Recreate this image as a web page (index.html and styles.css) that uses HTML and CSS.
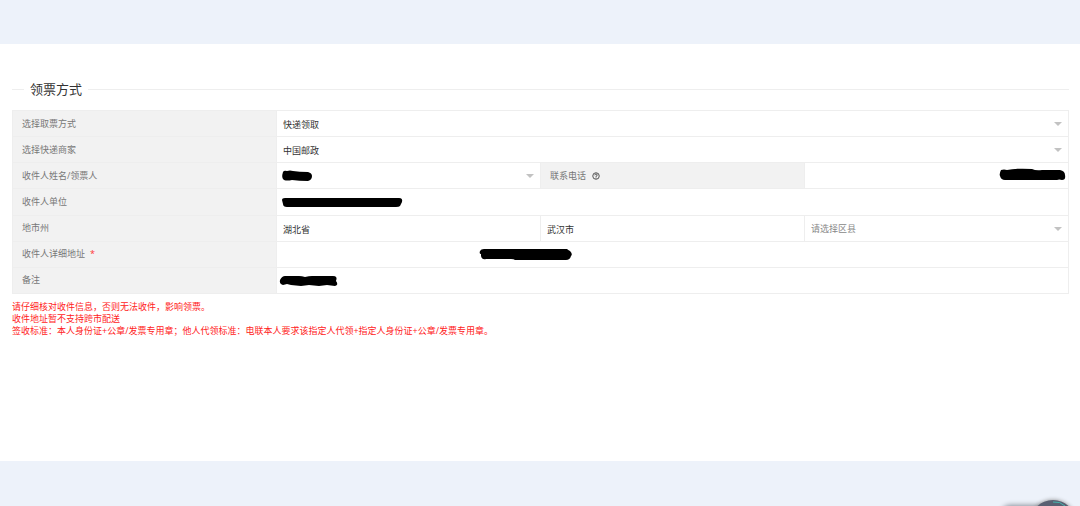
FILE: index.html
```html
<!DOCTYPE html>
<html lang="zh-CN">
<head>
<meta charset="utf-8">
<title>领票方式</title>
<link rel="stylesheet" href="styles.css">
</head>
<body>
<main class="panel">
  <form class="pickup">
    <h1 class="heading">领票方式</h1>
    <div class="form-grid">
      <label class="label" for="method">选择取票方式</label>
      <div class="field wide drop"><select class="control" id="method"><option>快递领取</option></select></div>

      <label class="label" for="courier">选择快递商家</label>
      <div class="field wide drop"><select class="control" id="courier"><option>中国邮政</option></select></div>

      <label class="label" for="name">收件人姓名/领票人</label>
      <div class="field drop">
        <select class="control" id="name"><option></option></select>
        <svg class="ink ink-name" width="32" height="14" viewBox="0 0 32 14" aria-hidden="true"><path d="M2 3Q3 1 6 2Q9 1 12 2Q18 3 27 3Q31 4 31 7Q31 11 27 12Q18 12 11 11Q6 12 3 11Q0 9 2 3Z"/></svg>
      </div>
      <div class="label">
        <label for="phone">联系电话</label>
        <svg class="help" width="8" height="8" viewBox="0 0 16 16" aria-hidden="true"><circle cx="8" cy="8" r="6.500"/><path d="M5.500 6.500Q5.500 4 8 4T10.500 6.300Q10.500 7.500 8 8.700V10M8 11V13"/></svg>
      </div>
      <div class="field">
        <input class="control" id="phone" type="tel">
        <svg class="ink ink-phone" width="67" height="14" viewBox="0 0 67 14" aria-hidden="true"><path d="M2 2Q5 1 8 2Q18 0 33 1Q37 3 43 2H61Q66 3 66 7Q67 12 63 12Q60 11 58 12H6Q2 12 1 8Q0 6 2 2Z"/></svg>
      </div>

      <label class="label" for="company">收件人单位</label>
      <div class="field wide">
        <input class="control" id="company" type="text">
        <svg class="ink ink-company" width="122" height="12" viewBox="0 0 122 12" aria-hidden="true"><path d="M1 3Q1 1 4 1H118Q122 1 121 5L119 9Q118 10 115 10H6Q2 10 2 7Z"/></svg>
      </div>

      <label class="label" for="province">地市州</label>
      <div class="field"><input class="control" id="province" type="text" value="湖北省"></div>
      <div class="field"><input class="control" type="text" value="武汉市" aria-label="市"></div>
      <div class="field drop"><select class="control muted" aria-label="区县"><option>请选择区县</option></select></div>

      <label class="label" for="address">收件人详细地址<span class="required">*</span></label>
      <div class="field wide">
        <input class="control" id="address" type="text">
        <svg class="ink ink-address" width="94" height="14" viewBox="0 0 94 14" aria-hidden="true"><path d="M1 3Q2 1 5 1H88Q89 2 91 3Q94 6 92 8Q91 12 87 12H36Q35 11 32 11H7Q3 12 2 8V6Q0 6 1 3Z"/></svg>
      </div>

      <label class="label" for="remark">备注</label>
      <div class="field wide">
        <input class="control" id="remark" type="text">
        <svg class="ink ink-remark" width="60" height="12" viewBox="0 0 60 12" aria-hidden="true"><path d="M1 5Q3 1 6 1H20Q23 1 26 2Q30 1 33 1H54Q59 1 57 6Q60 10 56 11L48 10L40 11L30 10L22 11L12 10L8 9L4 10Q0 9 1 5Z"/></svg>
      </div>
    </div>
    <div class="notes">
      <p>请仔细核对收件信息，否则无法收件，影响领票。</p>
      <p>收件地址暂不支持跨市配送</p>
      <p>签收标准：本人身份证+公章/发票专用章；他人代领标准：电联本人要求该指定人代领+指定人身份证+公章/发票专用章。</p>
    </div>
  </form>
</main>
<div class="assistant">
  <span class="assistant-bar"></span>
  <span class="assistant-face"></span>
  <svg class="assistant-shine" width="16" height="6" viewBox="0 0 16 6" aria-hidden="true"><path d="M1 2Q8 1 13 6"/></svg>
</div>
</body>
</html>
```
FILE: styles.css
```css
* {
  box-sizing: border-box;
}

body {
  margin: 0;
  min-height: 100vh;
  padding: 44px 0 45px;
  display: flex;
  flex-direction: column;
  background: #edf2fa;
  color: #333;
  font: 9px/12px "Open Sans", "Noto Sans CJK SC", sans-serif;
}

.panel {
  flex: 1;
  padding: 36px 11px 24px 12px;
  background: #fff;
}

.heading {
  display: flex;
  align-items: center;
  gap: 6px;
  margin: 0 0 12px;
  font-size: 13px;
  line-height: 18px;
  font-weight: 400;
}

.heading::before,
.heading::after {
  content: "";
  height: 1px;
  background: #eee;
}

.heading::before {
  width: 12px;
}

.heading::after {
  flex: 1;
}

.form-grid {
  display: grid;
  grid-template-columns: repeat(4, 1fr);
  grid-auto-rows: 1fr;
  min-height: 184px;
  border: solid #eee;
  border-width: 1px 0 0 1px;
}

.label,
.field {
  display: flex;
  align-items: center;
  border: solid #eee;
  border-width: 0 1px 1px 0;
}

.label {
  padding: 0 9px;
  background: #f2f2f2;
  color: #777;
}

.field {
  position: relative;
}

.wide {
  grid-column: span 3;
}

.control {
  width: 100%;
  height: 24px;
  margin: 0;
  padding: 2px 6px 0;
  border: 0;
  outline: 0;
  background: transparent;
  color: #333;
  font: inherit;
  appearance: none;
}

.control.muted {
  color: #888;
}

.drop::after {
  content: "";
  position: absolute;
  right: 6px;
  top: 11px;
  border: solid transparent;
  border-width: 4px 4px 0;
  border-top-color: #c2c2c2;
  pointer-events: none;
}

.required {
  margin-left: 5px;
  color: #f33;
}

.help {
  margin-left: 6px;
  fill: none;
  stroke: #555;
  stroke-width: 2;
}

.ink {
  position: absolute;
  fill: #000;
  pointer-events: none;
}

.ink-name {
  left: 4px;
  top: 6px;
}

.ink-phone {
  right: 2px;
  top: 5px;
}

.ink-company {
  left: 4px;
  top: 8px;
}

.ink-address {
  left: 202px;
  top: 6px;
}

.ink-remark {
  left: 2px;
  top: 7px;
}

.notes {
  margin-top: 7px;
  color: #f22;
}

.notes p {
  margin: 0;
}

.assistant {
  position: fixed;
  right: 0;
  bottom: 0;
  width: 90px;
  height: 16px;
  overflow: hidden;
}

.assistant-bar {
  position: absolute;
  left: 12px;
  top: 16px;
  width: 50px;
  height: 30px;
  border-radius: 8px;
  box-shadow: 0 0 5px 1px #8c929c;
}

.assistant-face {
  position: absolute;
  right: 4px;
  top: 10px;
  width: 46px;
  height: 46px;
  border-radius: 50%;
  background: #596072;
  box-shadow: 0 0 4px #888;
}

.assistant-shine {
  position: absolute;
  right: 12px;
  bottom: 0;
  fill: none;
  stroke: #45b5ad;
  stroke-width: 1;
}
```
